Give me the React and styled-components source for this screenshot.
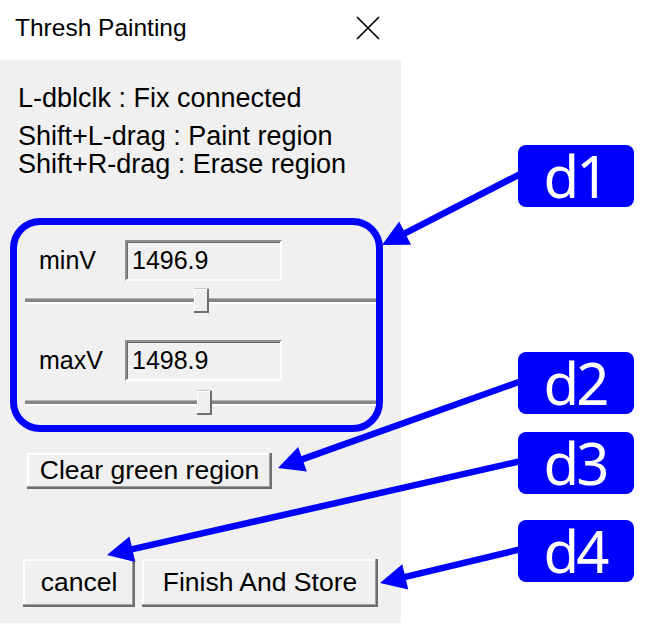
import React from "react";
import styled, { createGlobalStyle } from "styled-components";

const Global = createGlobalStyle`
  html, body { margin: 0; padding: 0; background: #ffffff; }
  body { font-family: "Liberation Sans", Arial, sans-serif; color: #000; }
`;

const Page = styled.div`
  position: relative;
  width: 651px;
  height: 632px;
  display: flex;
  flex-direction: row;
  background: #fff;
  overflow: hidden;
`;

const Window = styled.div`
  width: 401px;
  display: flex;
  flex-direction: column;
`;

const TitleBar = styled.div`
  height: 60px;
  background: #fff;
  display: flex;
  align-items: flex-start;
  justify-content: space-between;
  padding: 16px 21px 0 15px;
  box-sizing: border-box;
`;

const Title = styled.div`
  font-family: "Liberation Sans", Arial, sans-serif;
  font-size: 24.5px;
  line-height: 24px;
  color: #000;
`;

const CloseIcon = styled.svg`
  width: 24px;
  height: 24px;
  margin-top: 0px;
`;

const Body = styled.div`
  height: 563px;
  background: #f0f0f0;
  display: flex;
  flex-direction: column;
  align-items: flex-start;
  padding-top: 24px;
  box-sizing: border-box;
`;

const Instructions = styled.div`
  margin-left: 18px;
  font-size: 27px;
  line-height: 28px;
  white-space: nowrap;
`;

const Line = styled.div`
  margin-bottom: ${(p) => (p.$gap ? p.$gap : 0)}px;
`;

const Group = styled.div`
  margin-top: 40px;
  margin-left: 10px;
  width: 373px;
  height: 214px;
  box-sizing: border-box;
  border: 7px solid #0000ff;
  border-radius: 30px;
  padding-top: 15px;
  display: flex;
  flex-direction: column;
`;

const FieldRow = styled.div`
  display: flex;
  align-items: center;
  height: 41px;
  padding-left: 22px;
  margin-top: ${(p) => p.$top || 0}px;
`;

const FieldLabel = styled.div`
  width: 86px;
  font-size: 25px;
  line-height: 25px;
`;

const TextBox = styled.div`
  width: 157px;
  height: 41px;
  box-sizing: border-box;
  border-style: solid;
  border-width: 2px;
  border-color: #8e8e8e #ffffff #ffffff #8e8e8e;
  box-shadow: inset 1px 1px 0 #6a6a6a;
  background: #f0f0f0;
  display: flex;
  align-items: center;
  padding-left: 5px;
  font-size: 25px;
  line-height: 25px;
`;

const Slider = styled.div`
  position: relative;
  height: 25px;
  margin-left: 8px;
  margin-top: ${(p) => p.$top}px;
  display: flex;
  align-items: center;
`;

const Track = styled.div`
  width: 100%;
  height: 3px;
  background: #868686;
  border-top: 1px solid #b4b4b4;
  border-bottom: 2px solid #ffffff;
`;

const Thumb = styled.div`
  position: absolute;
  top: 0;
  width: 15px;
  height: 25px;
  box-sizing: border-box;
  background: #efefef;
  border-top: 1px solid #c8c8c8;
  box-shadow: inset -2px -2px 0 #707070, inset 1px 1px 0 #ffffff;
`;

const Button = styled.div`
  width: ${(p) => p.$w}px;
  height: ${(p) => p.$h}px;
  box-sizing: border-box;
  background: #f0f0f0;
  box-shadow: inset -2px -2px 0 #6e6e6e, inset -3px -3px 0 #a0a0a0,
    inset 2px 2px 0 #ffffff;
  display: flex;
  align-items: center;
  justify-content: center;
  padding-bottom: 3px;
  font-size: 26.5px;
  line-height: 26px;
  white-space: nowrap;
`;

const ClearWrap = styled.div`
  margin-top: 21px;
  margin-left: 27px;
`;

const ButtonRow = styled.div`
  display: flex;
  gap: 7px;
  margin-top: 70px;
  margin-left: 23px;
`;

const Callouts = styled.div`
  margin-left: 117px;
  padding-top: 145px;
  display: flex;
  flex-direction: column;
  position: relative;
  z-index: 2;
`;

const Tag = styled.div`
  width: 116px;
  height: 62px;
  margin-top: ${(p) => p.$top}px;
  background: #0000ff;
  border-radius: 8px;
  color: #fff;
  font-family: "Noto Sans", "Open Sans", sans-serif;
  font-size: 58px;
  letter-spacing: -3px;
  line-height: 62px;
  text-align: center;
  box-sizing: border-box;
  padding-right: 2px;
`;

const Overlay = styled.svg`
  position: absolute;
  left: 0;
  top: 0;
  width: 651px;
  height: 632px;
  pointer-events: none;
  z-index: 1;
`;

function Arrow({ x1, y1, x2, y2 }) {
  const dx = x1 - x2;
  const dy = y1 - y2;
  const len = Math.hypot(dx, dy);
  const ux = dx / len;
  const uy = dy / len;
  const hl = 26;
  const hw = 13;
  const bx = x2 + ux * hl;
  const by = y2 + uy * hl;
  const px = -uy;
  const py = ux;
  const pts = `${x2},${y2} ${bx + px * hw},${by + py * hw} ${bx - px * hw},${by - py * hw}`;
  return (
    <g>
      <line x1={x1} y1={y1} x2={bx - ux * 2} y2={by - uy * 2} stroke="#0000ff" strokeWidth="6.5" />
      <polygon points={pts} fill="#0000ff" />
    </g>
  );
}

const SLIDER_W = 351;
const THUMB_W = 15;

function Trackbar({ pct, top }) {
  return (
    <Slider $top={top}>
      <Track />
      <Thumb style={{ left: Math.round(pct * (SLIDER_W - THUMB_W)) }} />
    </Slider>
  );
}

export default function App() {
  return (
    <Page>
      <Global />
      <Window>
        <TitleBar>
          <Title>Thresh Painting</Title>
          <CloseIcon viewBox="0 0 24 24">
            <path d="M1 1 L23 23 M23 1 L1 23" stroke="#000" strokeWidth="1.7" fill="none" />
          </CloseIcon>
        </TitleBar>
        <Body>
          <Instructions>
            <Line $gap={10}>L-dblclk : Fix connected</Line>
            <Line>Shift+L-drag : Paint region</Line>
            <Line>Shift+R-drag : Erase region</Line>
          </Instructions>
          <Group>
            <FieldRow>
              <FieldLabel>minV</FieldLabel>
              <TextBox>1496.9</TextBox>
            </FieldRow>
            <Trackbar pct={0.503} top={7} />
            <FieldRow $top={27}>
              <FieldLabel>maxV</FieldLabel>
              <TextBox>1498.9</TextBox>
            </FieldRow>
            <Trackbar pct={0.512} top={9} />
          </Group>
          <ClearWrap>
            <Button $w={245} $h={36}>Clear green region</Button>
          </ClearWrap>
          <ButtonRow>
            <Button $w={112} $h={48}>cancel</Button>
            <Button $w={236} $h={48}>Finish And Store</Button>
          </ButtonRow>
        </Body>
      </Window>
      <Callouts>
        <Tag $top={0}>d1</Tag>
        <Tag $top={145}>d2</Tag>
        <Tag $top={18}>d3</Tag>
        <Tag $top={26}>d4</Tag>
      </Callouts>
      <Overlay viewBox="0 0 651 632">
        <Arrow x1={530} y1={169} x2={382} y2={245} />
        <Arrow x1={530} y1={378} x2={278} y2={468} />
        <Arrow x1={530} y1={459} x2={107} y2={555} />
        <Arrow x1={530} y1={547} x2={380} y2={583} />
      </Overlay>
    </Page>
  );
}
